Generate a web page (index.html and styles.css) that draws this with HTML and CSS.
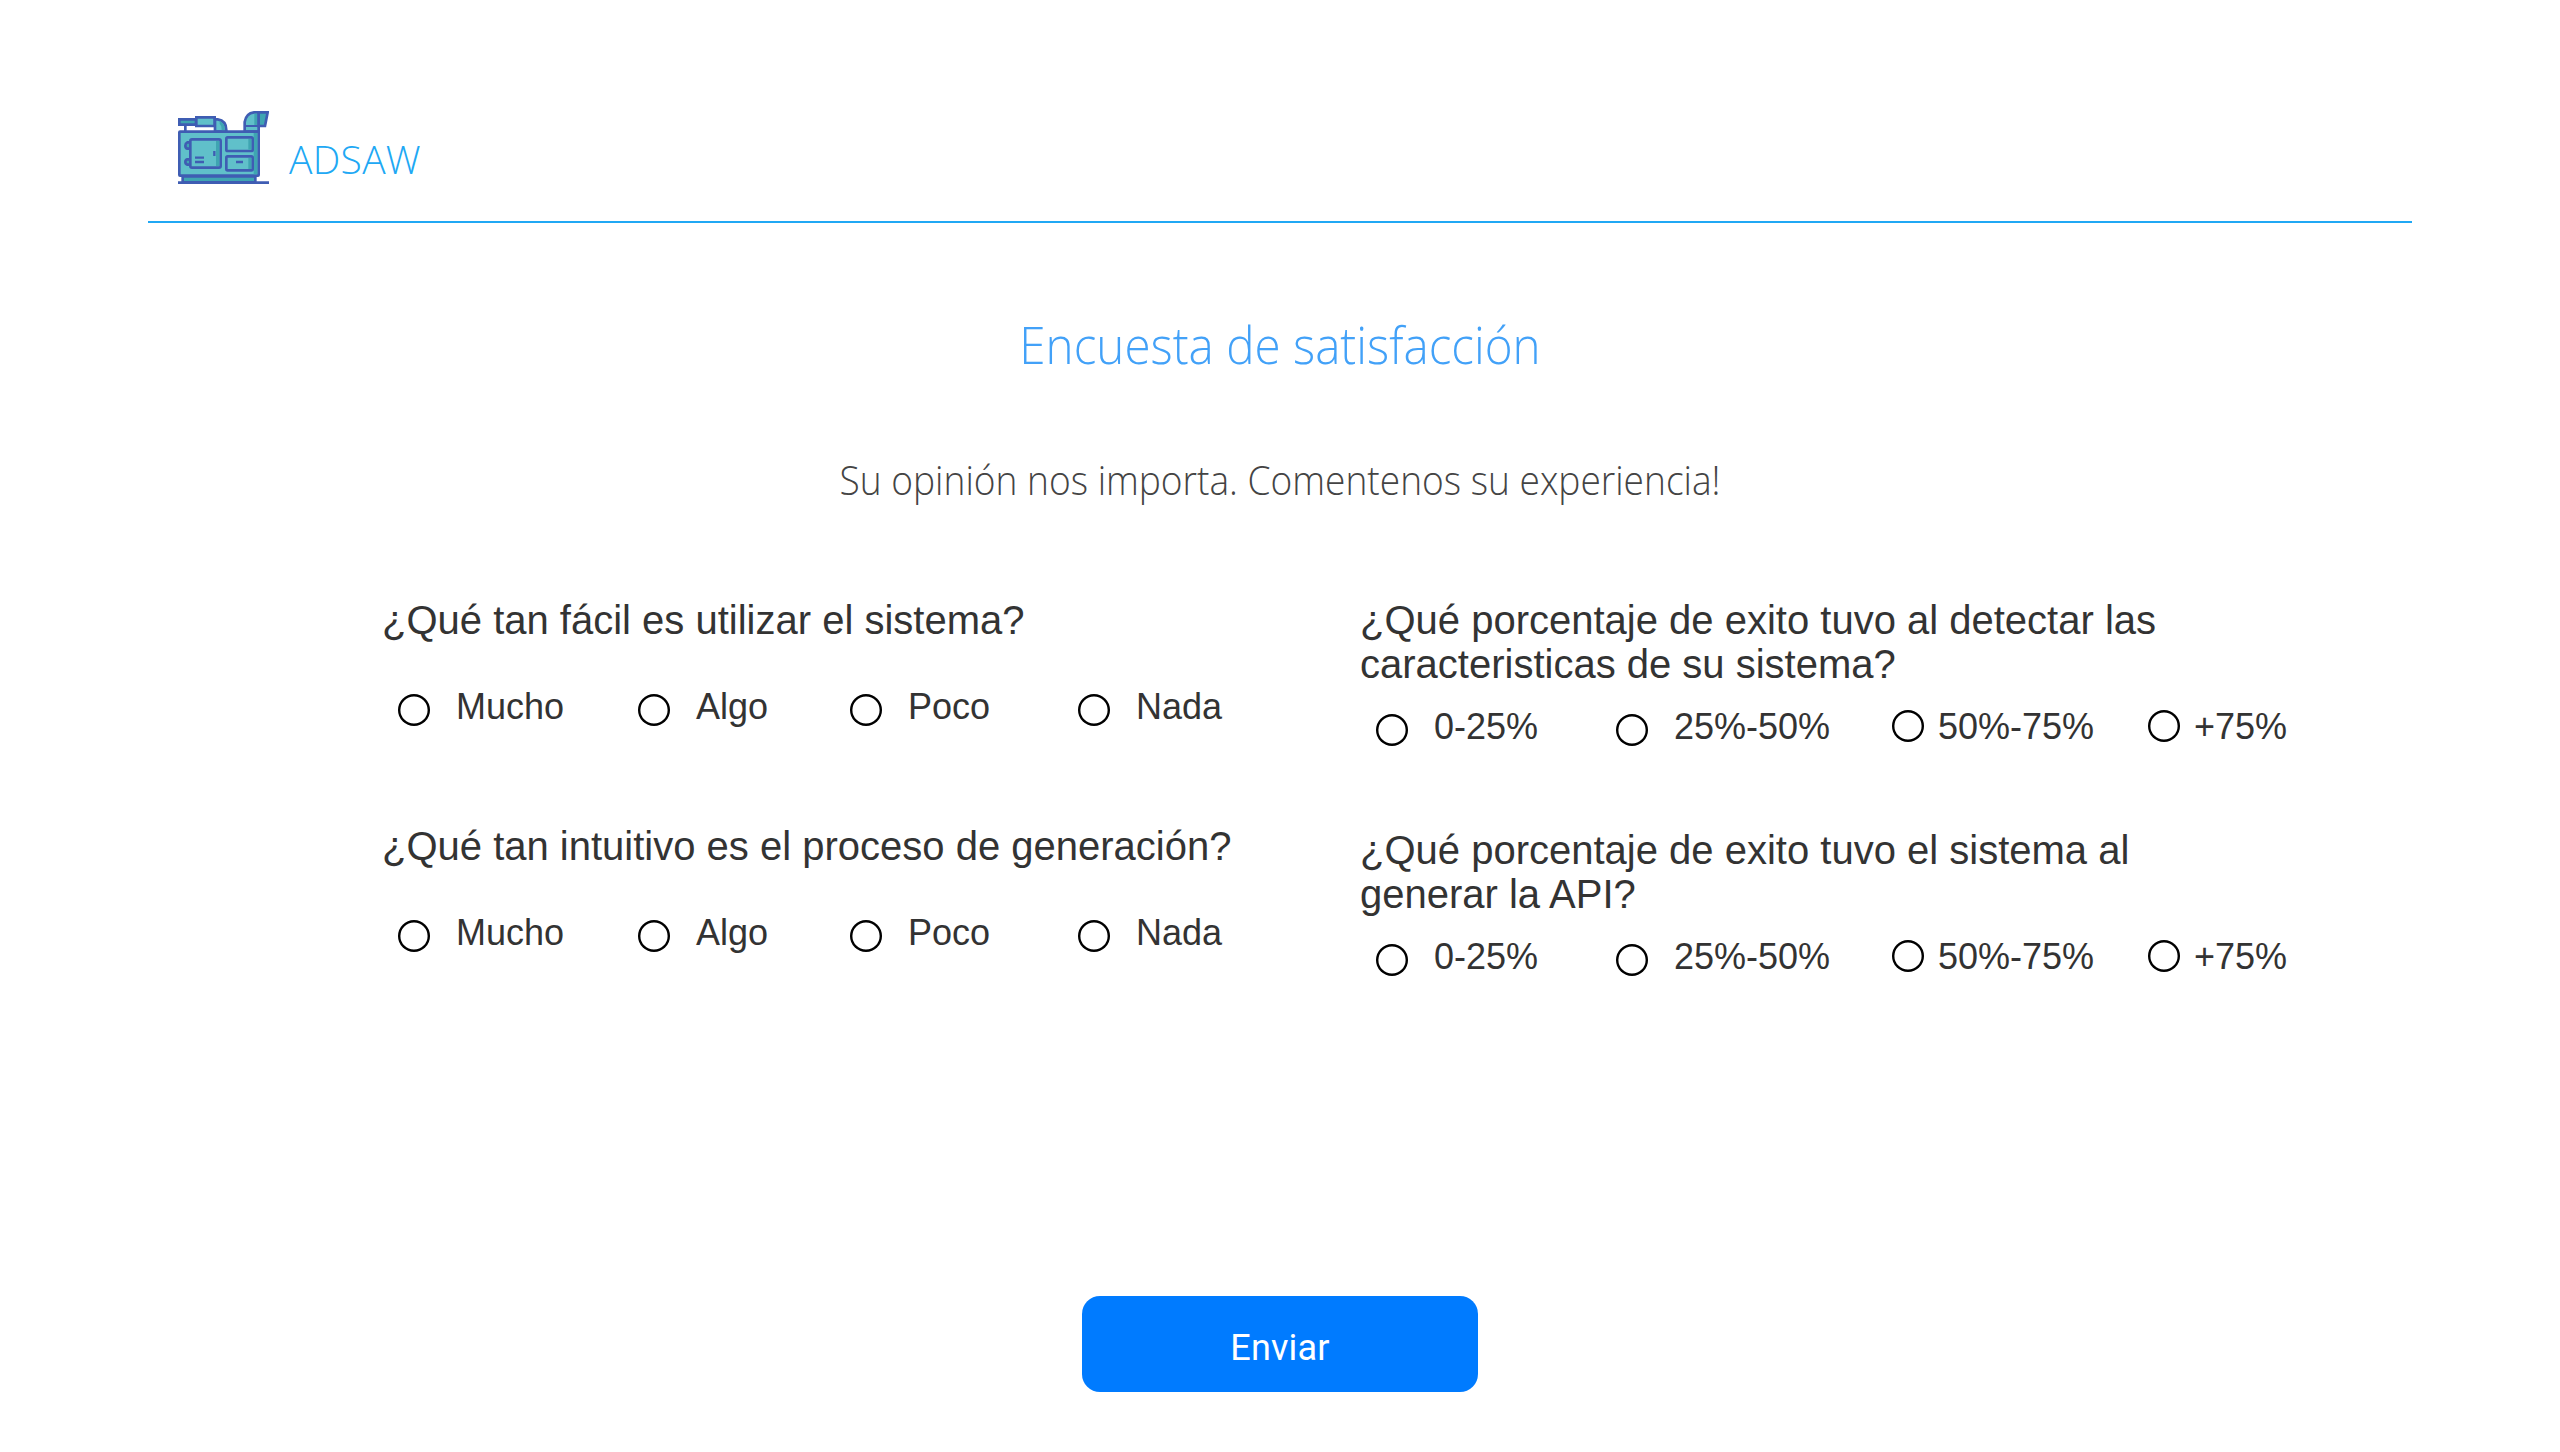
FILE: index.html
```html
<!DOCTYPE html>
<html lang="es">
<head>
<meta charset="utf-8">
<title>ADSAW - Encuesta de satisfacción</title>
<link rel="stylesheet" href="styles.css">
</head>
<body>
<header class="header">
  <svg class="logo" viewBox="39 33 273 219" fill="#60c0ca" stroke="#3f5db3" stroke-width="8" aria-hidden="true">
    <path d="M61 75v18" fill="none"/>
    <path d="M43 58h50v16H43z" fill="#3fa5b2"/>
    <path d="M94 52h55v26H94z"/>
    <path d="M150 58h8q26 4 26 32v5h-34z"/>
    <path d="M164 62q16 8 16 30h-10q0-16-6-20z" fill="#3fa5b2" stroke="none"/>
    <path d="M239 95V66q4-26 28-29h14v58z"/>
    <path d="M268 41h9v34h-9z" fill="#3fa5b2" stroke="none"/>
    <path d="M281 37h27l-8 41h-19z" fill="#3fa5b2"/>
    <path d="M241 78h40" fill="none" stroke-width="6"/>
    <path d="M53 229h218v18H53z" fill="#3fa5b2"/>
    <rect x="43" y="95" width="238" height="132" rx="2"/>
    <path d="M266 99h11v124h-11z" fill="#3fa5b2" stroke="none"/>
    <path d="M76 127H67q-6 3-6 10t6 9h9M76 178H67q-6 2-6 8t6 8h9" fill="#3fa5b2"/>
    <rect x="76" y="118" width="91" height="85" rx="5"/>
    <path d="M153 123h10v75h-10z" fill="#3fa5b2" stroke="none"/>
    <rect x="184" y="112" width="79" height="41" rx="4"/>
    <path d="M250 117h9v32h-9z" fill="#3fa5b2" stroke="none"/>
    <rect x="184" y="169" width="79" height="42" rx="4"/>
    <path d="M250 174h9v33h-9z" fill="#3fa5b2" stroke="none"/>
    <path d="M148 153v15M90 173h27M90 186h27M213 186h21" fill="none" stroke-width="7"/>
    <path d="M39 248h273" fill="none"/>
  </svg>
  <span class="brand">ADSAW</span>
</header>
<main class="main">
  <h1 class="title">Encuesta de satisfacción</h1>
  <p class="subtitle">Su opinión nos importa. Comentenos su experiencia!</p>
  <form class="survey">
    <div class="column column-left">
      <fieldset class="question">
        <legend class="prompt">¿Qué tan fácil es utilizar el sistema?</legend>
        <div class="options rating">
          <label class="option"><input type="radio" name="facil">Mucho</label>
          <label class="option"><input type="radio" name="facil">Algo</label>
          <label class="option"><input type="radio" name="facil">Poco</label>
          <label class="option"><input type="radio" name="facil">Nada</label>
        </div>
      </fieldset>
      <fieldset class="question">
        <legend class="prompt">¿Qué tan intuitivo es el proceso de generación?</legend>
        <div class="options rating">
          <label class="option"><input type="radio" name="intuitivo">Mucho</label>
          <label class="option"><input type="radio" name="intuitivo">Algo</label>
          <label class="option"><input type="radio" name="intuitivo">Poco</label>
          <label class="option"><input type="radio" name="intuitivo">Nada</label>
        </div>
      </fieldset>
    </div>
    <div class="column column-right">
      <fieldset class="question">
        <legend class="prompt">¿Qué porcentaje de exito tuvo al detectar las<br>caracteristicas de su sistema?</legend>
        <div class="options percent">
          <label class="option"><input type="radio" name="detectar">0-25%</label>
          <label class="option"><input type="radio" name="detectar">25%-50%</label>
          <label class="option tight"><input type="radio" name="detectar">50%-75%</label>
          <label class="option tight"><input type="radio" name="detectar">+75%</label>
        </div>
      </fieldset>
      <fieldset class="question">
        <legend class="prompt">¿Qué porcentaje de exito tuvo el sistema al<br>generar la API?</legend>
        <div class="options percent">
          <label class="option"><input type="radio" name="generar">0-25%</label>
          <label class="option"><input type="radio" name="generar">25%-50%</label>
          <label class="option tight"><input type="radio" name="generar">50%-75%</label>
          <label class="option tight"><input type="radio" name="generar">+75%</label>
        </div>
      </fieldset>
    </div>
    <button class="submit" type="button">Enviar</button>
  </form>
</main>
</body>
</html>
```
FILE: styles.css
```css
* { box-sizing: border-box; }

body {
  margin: 0;
  min-height: 1452px;
  background: #fff;
  color: #333;
  font-family: "Liberation Sans", Arial, sans-serif;
}

.header {
  display: flex;
  align-items: flex-start;
  height: 223px;
  margin: 0 148px;
  padding: 111px 0 0 30px;
  border-bottom: 2px solid #20a8f4;
}

.logo { display: block; width: 91px; height: 73px; }

.brand {
  margin: 20px 0 0 20px;
  font: 300 39px/56px "Open Sans", sans-serif;
  letter-spacing: 0.3px;
  color: #20a8f4;
}

.title,
.subtitle {
  margin: 0;
  text-align: center;
  font-family: "Open Sans", sans-serif;
  font-weight: 300;
  white-space: nowrap;
}

.title { padding-top: 81px; font-size: 51px; line-height: 80px; transform: scaleX(0.933); color: #42a1f8; }
.subtitle { padding-top: 66px; font-size: 39.5px; line-height: 60px; transform: scaleX(0.939); color: #444; }

.survey {
  display: grid;
  grid-template-columns: 978px 1fr;
  padding: 88px 0 0 382px;
}

.question { margin: 0; padding: 0; border: 0; min-width: 0; }
.prompt { display: block; padding: 0; font-size: 40px; line-height: 44px; white-space: nowrap; }
.column-left .question { height: 226px; }
.column-right .question { height: 230px; }

.options { display: grid; font-size: 36px; line-height: 42px; white-space: nowrap; }
.rating { grid-template-columns: 240px 212px 228px 200px; padding: 44px 0 0 16px; }
.percent { grid-template-columns: 240px 276px 256px 200px; padding: 20px 0 0 16px; }
.option { display: flex; align-items: flex-start; gap: 26px; }
.tight { gap: 14px; }

input {
  appearance: none;
  flex: none;
  width: 32px;
  height: 32px;
  margin: 8px 0 0;
  border: 0;
  border-radius: 50%;
  box-shadow: inset 0 0 0 2.4px #000;
}
.tight input { margin-top: 4px; }

.submit {
  grid-column: 1 / -1;
  width: 396px;
  height: 96px;
  margin: 238px 0 0 700px;
  padding: 8px 0 0;
  border: 0;
  border-radius: 18px;
  background: #007bff;
  color: #fff;
  font: 400 36px/42px Roboto, sans-serif;
  letter-spacing: 0.2px;
}
```
